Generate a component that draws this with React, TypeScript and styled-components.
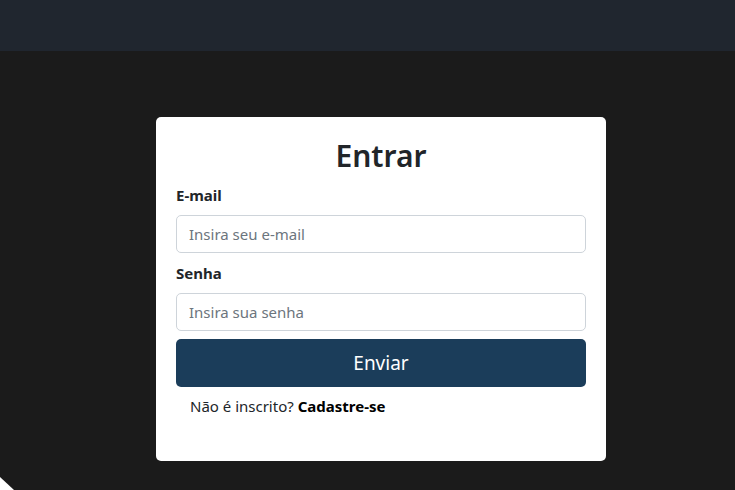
import React from "react";
import styled, { createGlobalStyle } from "styled-components";

const Global = createGlobalStyle`
  html, body { margin: 0; padding: 0; }
  body {
    background: #1b1b1b;
    font-family: "Noto Sans", "Open Sans", sans-serif;
    color: #212529;
    overflow: hidden;
  }
  * { box-sizing: border-box; }
`;

const Page = styled.div`
  position: relative;
  width: 735px;
  height: 490px;
  display: flex;
  flex-direction: column;
  background: #1b1b1b;
  overflow: hidden;
`;

const NavBar = styled.header`
  height: 51px;
  background: #20262f;
  flex-shrink: 0;
`;

const Main = styled.main`
  display: flex;
  justify-content: center;
  padding: 66px 0 0 27px;
`;

const Card = styled.form`
  width: 450px;
  background: #ffffff;
  border-radius: 5px;
  padding: 20px 20px 0;
  display: flex;
  flex-direction: column;
`;

const Title = styled.h1`
  margin: 0 0 8px;
  font-size: 30px;
  font-weight: 600;
  line-height: 38px;
  text-align: center;
  color: #212529;
`;

const Label = styled.label`
  display: block;
  font-size: 15px;
  font-weight: 700;
  line-height: 24px;
  color: #212529;
  margin-bottom: 8px;
`;

const Input = styled.input`
  display: block;
  width: 100%;
  height: 38px;
  padding: 0 12px;
  border: 1px solid #ced4da;
  border-radius: 5px;
  font-family: inherit;
  font-size: 15px;
  color: #212529;
  margin-bottom: 8px;
  &::placeholder {
    color: #6c757d;
  }
`;

const Submit = styled.button`
  display: block;
  width: 100%;
  height: 48px;
  border: none;
  border-radius: 5px;
  background: #1b3d5a;
  color: #ffffff;
  font-family: inherit;
  font-size: 19px;
  cursor: pointer;
`;

const Footer = styled.p`
  margin: 7px 0 43px;
  padding-left: 14px;
  font-size: 15px;
  line-height: 24px;
  color: #212529;
`;

const Strong = styled.a`
  font-weight: 700;
  color: #000;
  text-decoration: none;
`;

const Corner = styled.div`
  position: absolute;
  left: 0;
  bottom: 0;
  width: 14px;
  height: 13px;
  background: #ffffff;
  clip-path: polygon(0 0, 100% 100%, 0 100%);
`;

export default function App() {
  return (
    <>
      <Global />
      <Page>
        <NavBar />
        <Main>
          <Card onSubmit={(e) => e.preventDefault()}>
            <Title>Entrar</Title>
            <Label htmlFor="email">E-mail</Label>
            <Input id="email" type="email" placeholder="Insira seu e-mail" />
            <Label htmlFor="senha">Senha</Label>
            <Input id="senha" type="password" placeholder="Insira sua senha" />
            <Submit type="submit">Enviar</Submit>
            <Footer>
              Não é inscrito? <Strong href="#">Cadastre-se</Strong>
            </Footer>
          </Card>
        </Main>
        <Corner />
      </Page>
    </>
  );
}
